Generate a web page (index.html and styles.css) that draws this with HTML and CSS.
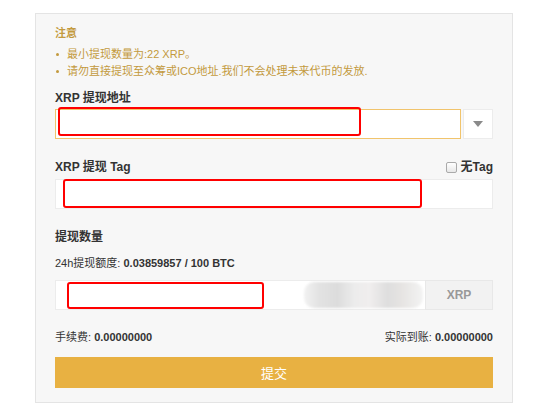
FILE: index.html
```html
<!DOCTYPE html>
<html lang="zh-CN">
<head>
    <meta charset="UTF-8">
    <title>XRP 提现</title>
    <link rel="stylesheet" href="styles.css">
</head>
<body>
    <div class="panel">
        <div class="notice">
            <div class="notice-title">注意</div>
            <ul class="notice-list">
                <li>最小提现数量为:22 XRP。</li>
                <li>请勿直接提现至众筹或ICO地址.我们不会处理未来代币的发放.</li>
            </ul>
        </div>

        <div class="label label-first">XRP 提现地址</div>
        <div class="row">
            <div class="input input-active"></div>
            <div class="select-btn"><span class="caret"></span></div>
            <div class="mark mark-addr"></div>
        </div>

        <div class="label label-split">
            <span>XRP 提现 Tag</span>
            <label class="check"><span class="box"></span>无Tag</label>
        </div>
        <div class="row">
            <div class="input"></div>
            <div class="mark mark-tag"></div>
        </div>

        <div class="label label-gap">提现数量</div>
        <div class="quota">24h提现额度: <b>0.03859857 / 100 BTC</b></div>
        <div class="row">
            <div class="input input-left"></div>
            <div class="unit">XRP</div>
            <div class="blur"></div>
            <div class="mark mark-amount"></div>
        </div>

        <div class="fees">
            <span>手续费: <b>0.00000000</b></span>
            <span>实际到账: <b>0.00000000</b></span>
        </div>

        <button class="submit">提交</button>
    </div>
</body>
</html>
```

FILE: styles.css
```css
* {
    margin: 0;
    padding: 0;
    box-sizing: border-box;
}

body {
    background: #fff;
    font-family: "Liberation Sans", "Noto Sans CJK SC", sans-serif;
    font-size: 11px;
    color: #333;
}

.panel {
    width: 478px;
    height: 390px;
    margin: 13px 0 0 35px;
    padding: 11px 19px 0 19px;
    background: #f7f7f7;
    border: 1px solid #e4e4e4;
}

.notice {
    color: #c39a3e;
    line-height: 17px;
}

.notice-title {
    font-weight: bold;
    margin-bottom: 4px;
}

.notice-list {
    list-style: none;
}

.notice-list li {
    position: relative;
    padding-left: 12px;
}

.notice-list li::before {
    content: "";
    position: absolute;
    left: 1px;
    top: 7px;
    width: 3px;
    height: 3px;
    border-radius: 50%;
    background: #c39a3e;
}

.label {
    font-size: 12px;
    line-height: 17px;
    font-weight: bold;
    color: #333;
    margin-bottom: 2px;
}

.label-first {
    margin-top: 10px;
}

.label-split {
    display: flex;
    justify-content: space-between;
    margin-top: 20px;
    margin-bottom: 3px;
}

.label-gap {
    margin-top: 20px;
}

.check {
    display: flex;
    align-items: center;
    gap: 4px;
}

.box {
    width: 11px;
    height: 11px;
    border: 1px solid #aaa;
    border-radius: 2px;
    background: linear-gradient(#fff, #e8e8e8);
}

.row {
    position: relative;
    display: flex;
    height: 30px;
}

.input {
    flex: 1;
    background: #fff;
    border: 1px solid #ececec;
}

.input-active {
    border-color: #f1c46c;
}

.input-left {
    border-right: none;
}

.select-btn {
    width: 30px;
    margin-left: 2px;
    background: #fff;
    border: 1px solid #ececec;
    display: flex;
    align-items: center;
    justify-content: center;
}

.caret {
    width: 0;
    height: 0;
    border-left: 5px solid transparent;
    border-right: 5px solid transparent;
    border-top: 6px solid #8a8a8a;
}

.unit {
    width: 68px;
    background: #f2f2f2;
    border: 1px solid #e8e8e8;
    color: #999;
    font-size: 12px;
    font-weight: bold;
    display: flex;
    align-items: center;
    justify-content: center;
}

.quota {
    margin-top: 9px;
    margin-bottom: 8px;
    line-height: 17px;
}

.fees {
    display: flex;
    justify-content: space-between;
    line-height: 17px;
    margin-top: 19px;
}

.submit {
    display: block;
    width: 100%;
    height: 31px;
    margin-top: 11px;
    border: none;
    background: #e8b142;
    color: #fff;
    font-family: inherit;
    font-size: 13px;
}

/* annotation overlays */
.mark {
    position: absolute;
    border: 2px solid #f00;
    border-radius: 3px;
}

.mark-addr {
    left: 3px;
    top: -2px;
    width: 303px;
    height: 29px;
}

.mark-tag {
    left: 8px;
    top: 0;
    width: 359px;
    height: 29px;
}

.mark-amount {
    left: 12px;
    top: 2px;
    width: 197px;
    height: 27px;
}

.blur {
    position: absolute;
    left: 249px;
    top: 2px;
    width: 119px;
    height: 26px;
    border-radius: 10px;
    background: linear-gradient(90deg, #f2f2f2 0%, #e3e3e3 12%, #dcdcdc 28%, #ececec 42%, #f0eeee 55%, #dedede 70%, #e6e4e2 82%, #f3f3f3 100%);
    filter: blur(1px);
}
```
